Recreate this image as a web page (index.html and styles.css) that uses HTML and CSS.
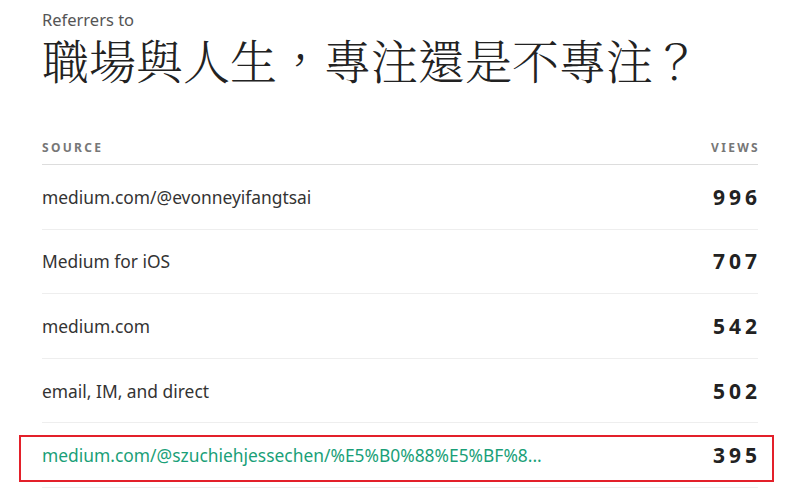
FILE: index.html
```html
<!DOCTYPE html>
<html lang="zh-Hant">
<head>
  <meta charset="UTF-8" />
  <title>Referrers</title>
  <link rel="stylesheet" href="styles.css">
</head>
<body>
  <div class="page">
    <div class="kicker">Referrers to</div>
    <h1 class="title">職場與人生，專注還是不專注？</h1>

    <div class="table">
      <div class="head">
        <span>Source</span>
        <span>Views</span>
      </div>
      <div class="row">
        <span class="src">medium.com/@evonneyifangtsai</span>
        <span class="num">996</span>
      </div>
      <div class="row">
        <span class="src">Medium for iOS</span>
        <span class="num">707</span>
      </div>
      <div class="row">
        <span class="src">medium.com</span>
        <span class="num">542</span>
      </div>
      <div class="row">
        <span class="src">email, IM, and direct</span>
        <span class="num">502</span>
      </div>
      <div class="row marked">
        <span class="src link">medium.com/@szuchiehjessechen/%E5%B0%88%E5%BF%8...</span>
        <span class="num">395</span>
      </div>
    </div>
  </div>
</body>
</html>
```

FILE: styles.css
```css
body {
  margin: 0;
  background: #fff;
  font-family: 'Noto Sans', sans-serif;
  color: #333;
}
.page {
  width: 716px;
  margin-left: 42px;
  padding-top: 9px;
}
.kicker {
  font-size: 16.5px;
  line-height: 22px;
  color: #555;
}
.title {
  margin: 0;
  font-family: 'Noto Serif CJK TC', 'Noto Sans CJK TC', serif;
  font-weight: 300;
  font-size: 47px;
  line-height: 56px;
  color: #222;
}
.table {
  margin-top: 53px;
}
.head {
  display: flex;
  justify-content: space-between;
  font-size: 12px;
  line-height: 16px;
  font-weight: bold;
  letter-spacing: 2.3px;
  text-transform: uppercase;
  color: #777;
  padding-bottom: 8px;
  border-bottom: 1px solid #ddd;
}
.head span:last-child {
  margin-right: -2px;
}
.row {
  position: relative;
  display: flex;
  justify-content: space-between;
  align-items: center;
  height: 63.6px;
  border-bottom: 1px solid #eee;
}
.src {
  font-size: 17.4px;
  color: #333;
}
.link {
  color: #1a9f78;
}
.num {
  font-size: 21px;
  font-weight: bold;
  letter-spacing: 4px;
  margin-right: -3px;
  color: #222;
}
.marked::after {
  content: "";
  position: absolute;
  left: -23px;
  right: -16px;
  top: 12px;
  bottom: 5px;
  border: 2px solid #e3202a;
}
```
